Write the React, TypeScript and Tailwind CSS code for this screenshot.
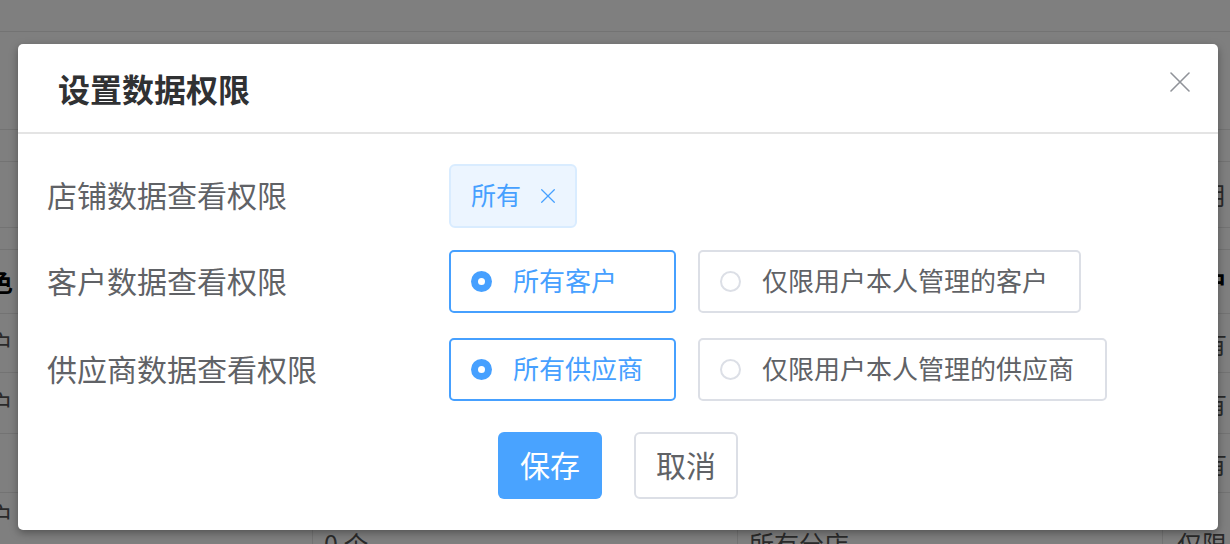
const font = "font-['Noto_Sans_CJK_SC','Noto_Sans',sans-serif]";

const CloseIcon = ({ size = 20, color = "#909399", stroke = 1.6 }) => (
  <svg width={size} height={size} viewBox="0 0 20 20" fill="none">
    <path d="M1 1L19 19M19 1L1 19" stroke={color} strokeWidth={stroke} strokeLinecap="round" />
  </svg>
);

const Radio = ({ label, checked, wide }: { label: string; checked?: boolean; wide?: boolean }) => {
  if (checked) {
    return (
      <div className={`${wide ? "w-[227px]" : "pr-[35px]"} h-full flex items-center pl-[20px] border-2 border-[#46a0ff] rounded-[5px]`}>
        <span className="w-[21px] h-[21px] rounded-full bg-[#46a0ff] flex items-center justify-center">
          <span className="w-[7px] h-[7px] rounded-full bg-white" />
        </span>
        <span className="ml-[21px] pb-[4px] text-[26px] leading-none text-[#46a0ff]">{label}</span>
      </div>
    );
  }
  return (
    <div className="h-full flex items-center pl-[20px] pr-[31px] border-2 border-[#dcdfe6] rounded-[5px]">
      <span className="w-[21px] h-[21px] rounded-full border-2 border-[#dcdfe6] bg-white" />
      <span className="ml-[21px] pb-[4px] text-[26px] leading-none text-[#606266]">{label}</span>
    </div>
  );
};

const Label = ({ children }: { children: string }) => (
  <div className="w-[431px] pl-[29px] pb-[4px] text-[30px] leading-none text-[#606266]">{children}</div>
);

// faded table behind the dialog
const BgCell = ({ text, bold, className = "" }: { text?: string; bold?: boolean; className?: string }) => (
  <div className={`flex items-center overflow-hidden whitespace-nowrap text-[25px] leading-none ${bold ? "font-bold text-black" : "text-[#555]"} ${className}`}>
    {text}
  </div>
);

const BgRow = ({ h, cells, lines }: { h: string; cells?: { text?: string; bold?: boolean }[]; lines?: boolean }) => (
  <div className={`${h} border-b border-[#e6e6e6] grid grid-cols-[13px_299px_425px_425px_1fr]`}>
    {cells ? (
      <>
        <BgCell text={cells[0]?.text} bold={cells[0]?.bold} className="justify-end" />
        <BgCell />
        <BgCell text={cells[1]?.text} bold={cells[1]?.bold} className={`pl-[11px] ${lines ? "border-l border-[#e6e6e6]" : ""}`} />
        <BgCell text={cells[2]?.text} bold={cells[2]?.bold} className={`pl-[11px] ${lines ? "border-l border-[#e6e6e6]" : ""}`} />
        <BgCell text={cells[3]?.text} bold={cells[3]?.bold} className={`pl-[14px] ${lines ? "border-l border-[#e6e6e6]" : ""}`} />
      </>
    ) : null}
  </div>
);

export default function App() {
  return (
    <div className={`relative w-[1230px] h-[544px] overflow-hidden bg-white ${font}`}>
      <div className="flex flex-col">
        <BgRow h="h-[32px]" />
        <BgRow h="h-[98px]" />
        <BgRow h="h-[32px]" />
        <BgRow h="h-[66px]" cells={[{}, {}, {}, { text: "启用" }]} />
        <BgRow h="h-[22px]" />
        <BgRow h="h-[64px]" lines cells={[{ text: "角色", bold: true }, {}, {}, { text: "客户", bold: true }]} />
        <BgRow h="h-[59px]" lines cells={[{ text: "客户" }, {}, {}, { text: "所有" }]} />
        <BgRow h="h-[61px]" lines cells={[{ text: "客户" }, {}, {}, { text: "所有" }]} />
        <BgRow h="h-[59px]" lines cells={[{}, {}, {}, { text: "所有" }]} />
        <div className="h-[70px] grid grid-cols-[13px_299px_425px_425px_1fr] text-[25px] leading-none text-[#555]">
          <div className="flex justify-end overflow-hidden whitespace-nowrap pt-[10px]">客户</div>
          <div />
          <div className="border-l border-[#e6e6e6] pl-[11px] pt-[38px]">0 个</div>
          <div className="border-l border-[#e6e6e6] pl-[11px] pt-[38px]">所有分店</div>
          <div className="border-l border-[#e6e6e6] pl-[14px] pt-[38px] whitespace-nowrap">仅限</div>
        </div>
      </div>

      <div className="absolute inset-0 bg-black/50">
        <div className="ml-[18px] mt-[44px] w-[1200px] h-[486px] rounded-[5px] bg-white shadow-[0_3px_8px_rgba(0,0,0,0.35)] flex flex-col">
          <div className="h-[90px] shrink-0 border-b-2 border-[#e4e4e4] flex items-center justify-between pl-[40px] pr-[28px]">
            <h2 className="pb-[1px] text-[32px] font-bold leading-none text-[#303133]">设置数据权限</h2>
            <div className="-mt-[12px]">
              <CloseIcon />
            </div>
          </div>

          <div className="pt-[30px] flex flex-col">
            <div className="h-[64px] flex items-center">
              <Label>店铺数据查看权限</Label>
              <div className="h-full flex items-center gap-[20px] pl-[20px] pr-[20px] bg-[#ecf5ff] border-2 border-[#d9ecff] rounded-[6px]">
                <span className="pb-[4px] text-[25px] leading-none text-[#46a0ff]">所有</span>
                <CloseIcon size={14} color="#46a0ff" stroke={1.8} />
              </div>
            </div>

            <div className="mt-[22px] h-[63px] flex items-center">
              <Label>客户数据查看权限</Label>
              <div className="h-full flex gap-[22px]">
                <Radio label="所有客户" checked wide />
                <Radio label="仅限用户本人管理的客户" />
              </div>
            </div>

            <div className="mt-[25px] h-[63px] flex items-center">
              <Label>供应商数据查看权限</Label>
              <div className="h-full flex gap-[22px]">
                <Radio label="所有供应商" checked wide />
                <Radio label="仅限用户本人管理的供应商" />
              </div>
            </div>

            <div className="mt-[31px] flex justify-center gap-[32px]">
              <button className="w-[104px] h-[67px] pb-[4px] rounded-[6px] bg-[#49a3ff] text-white text-[30px] leading-none">保存</button>
              <button className="w-[104px] h-[67px] pb-[4px] rounded-[6px] border-2 border-[#dcdfe6] bg-white text-[#606266] text-[30px] leading-none">取消</button>
            </div>
          </div>
        </div>
      </div>
    </div>
  );
}
